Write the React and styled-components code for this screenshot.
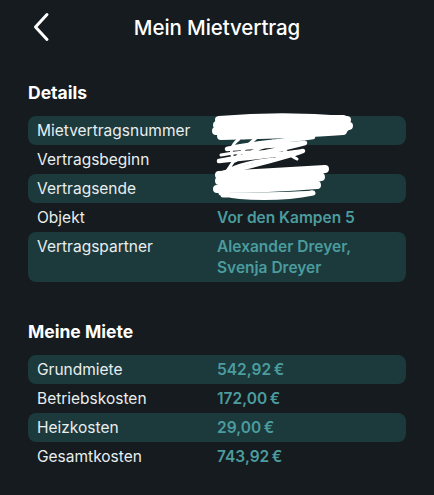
import React from "react";
import styled, { createGlobalStyle } from "styled-components";

const Global = createGlobalStyle`
  html, body { margin: 0; padding: 0; background: #151b1e; }
  body { font-family: Inter, "Noto Sans", sans-serif; -webkit-font-smoothing: antialiased; }
`;

const Page = styled.div`
  width: 434px;
  height: 495px;
  background: #151b1e;
  color: #eef2f2;
  box-sizing: border-box;
  overflow: hidden;
  padding: 0 28px;
`;

const Header = styled.header`
  position: relative;
  height: 54px;
  display: flex;
  align-items: center;
  justify-content: center;
  margin: 0 -28px;
`;

const Back = styled.button`
  position: absolute;
  left: 30px;
  top: 11px;
  width: 22px;
  height: 32px;
  background: none;
  border: 0;
  padding: 0;
  display: flex;
  align-items: center;
  justify-content: center;
`;

const Title = styled.h1`
  margin: 0;
  font-size: 20.5px;
  font-weight: 500;
  color: #ffffff;
  letter-spacing: -0.1px;
`;

const Section = styled.section`
  margin-top: ${(p) => p.$top}px;
`;

const SectionTitle = styled.h2`
  margin: 0 0 12px 0;
  font-size: 17.5px;
  font-weight: 700;
  color: #ffffff;
  line-height: 22px;
`;

const List = styled.div`
  position: relative;
  display: flex;
  flex-direction: column;
`;

const Row = styled.div`
  display: grid;
  grid-template-columns: 180px 1fr;
  padding: 4px 9px;
  border-radius: 8px;
  background: ${(p) => (p.$shaded ? "#1c393c" : "transparent")};
  font-size: 15.5px;
  line-height: 21px;
`;

const Label = styled.span`
  color: #e9eeee;
`;

const Value = styled.span`
  color: #4b9c9e;
  font-weight: 600;
  white-space: pre-line;
`;

const Scribble = styled.svg`
  position: absolute;
  left: 185px;
  top: -1px;
  width: 140px;
  height: 86px;
  overflow: visible;
  pointer-events: none;
`;

const details = [
  ["Mietvertragsnummer", ""],
  ["Vertragsbeginn", ""],
  ["Vertragsende", ""],
  ["Objekt", "Vor den Kampen 5"],
  ["Vertragspartner", "Alexander Dreyer,\nSvenja Dreyer"],
];

const rent = [
  ["Grundmiete", "542,92\u202F€"],
  ["Betriebskosten", "172,00\u202F€"],
  ["Heizkosten", "29,00\u202F€"],
  ["Gesamtkosten", "743,92\u202F€"],
];

export default function App() {
  return (
    <Page>
      <Global />
      <Header>
        <Back aria-label="Zurück">
          <svg width="20" height="30" viewBox="0 0 20 30">
            <path d="M16 2.5 L4.5 15 L16 27.5" fill="none" stroke="#fff" strokeWidth="3" strokeLinecap="round" strokeLinejoin="round" />
          </svg>
        </Back>
        <Title>Mein Mietvertrag</Title>
      </Header>
      <Section $top={28}>
        <SectionTitle>Details</SectionTitle>
        <List>
          {details.map(([l, v], i) => (
            <Row key={l} $shaded={i % 2 === 0}>
              <Label>{l}</Label>
              <Value>{v}</Value>
            </Row>
          ))}
          <Scribble viewBox="0 0 140 86">
            <g fill="none" stroke="#ffffff" strokeLinecap="round" strokeLinejoin="round">
              <path d="M6 5 C50 1 100 2 134 5 C100 8 50 8 4 10 C50 10 100 10 136 11 C100 14 50 15 3 16 C50 16 100 16 130 16 C90 19 50 20 8 21" strokeWidth="8" />
              <path d="M70 4 L130 4 M40 13 L132 13" strokeWidth="8" />
              <path d="M30 22 C50 20 80 20 100 22 C70 26 40 28 14 34 C40 32 70 30 92 28 C70 34 40 40 6 46 C40 42 70 40 90 36 C70 44 40 50 10 58" strokeWidth="4.5" />
              <path d="M26 24 C18 30 16 38 22 46 C30 40 44 34 56 30 M44 22 C30 34 20 46 14 56 C24 50 40 46 60 44 M60 26 C70 34 76 40 84 44 M8 40 C30 36 50 36 70 38" strokeWidth="3" />
              <path d="M6 60 C40 58 80 56 112 54 C80 60 40 62 6 66 C40 66 80 64 108 62 C80 68 40 72 4 74 C40 74 80 72 104 70" strokeWidth="8" />
              <path d="M8 78 C30 84 70 84 100 78 C80 80 40 80 10 80" strokeWidth="5" />
            </g>
          </Scribble>
        </List>
      </Section>
      <Section $top={39}>
        <SectionTitle>Meine Miete</SectionTitle>
        <List>
          {rent.map(([l, v], i) => (
            <Row key={l} $shaded={i % 2 === 0}>
              <Label>{l}</Label>
              <Value>{v}</Value>
            </Row>
          ))}
        </List>
      </Section>
    </Page>
  );
}
